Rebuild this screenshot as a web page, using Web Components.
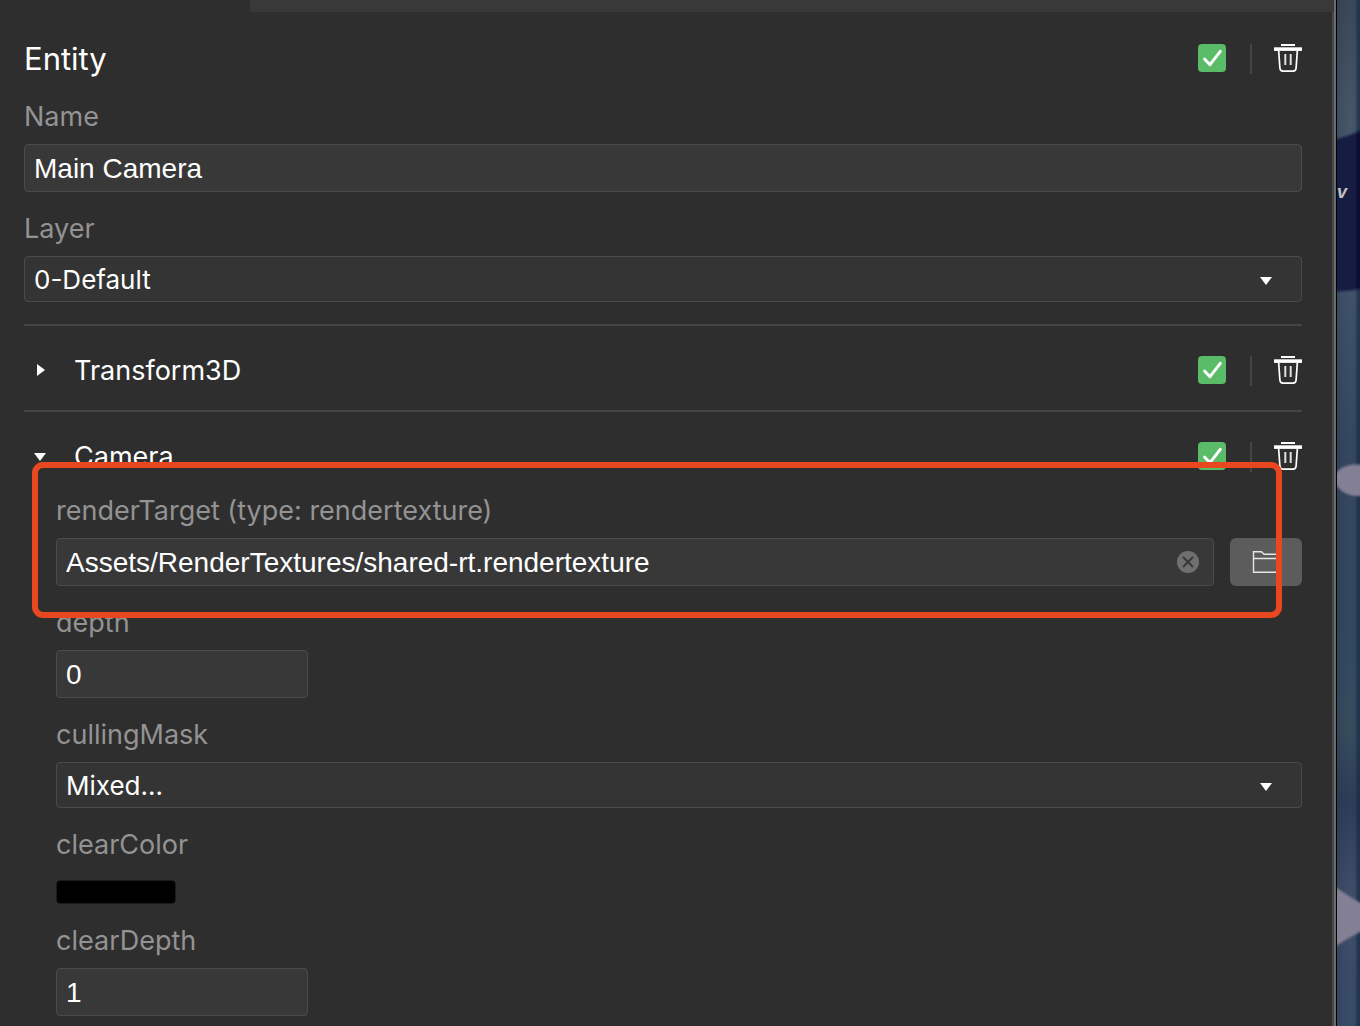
<!DOCTYPE html>
<html lang="en">
<head>
<meta charset="utf-8">
<title>Inspector</title>
<style>
html,body{margin:0;height:100%;overflow:hidden;background:#2e2e2e}
body{font-family:Inter,"Liberation Sans",sans-serif;color:#fff;
--panel:#2e2e2e;--line:#454545;--muted:#939393;--field:#383838;--select:#343434;--border:#4b4b4b}
</style>
</head>
<body>
<editor-shell>
<inspector-panel>
<inspector-section heading="Entity" large>
<property-field label="Name" kind="text" value="Main Camera"></property-field>
<property-field label="Layer" kind="select" value="0-Default"></property-field>
</inspector-section>
<inspector-section heading="Transform3D" collapsible></inspector-section>
<inspector-section heading="Camera" collapsible open>
<highlight-frame slot="overlay"></highlight-frame>
<property-field label="renderTarget (type: rendertexture)" kind="asset" value="Assets/RenderTextures/shared-rt.rendertexture"></property-field>
<property-field label="depth" kind="number" value="0"></property-field>
<property-field label="cullingMask" kind="select" value="Mixed..."></property-field>
<property-field label="clearColor" kind="color" value="#000000"></property-field>
<property-field label="clearDepth" kind="number" value="1"></property-field>
</inspector-section>
</inspector-panel>
<scene-strip slot="scene"></scene-strip>
</editor-shell>
<script>
const base = `:host,*{box-sizing:border-box}button{appearance:none;border:0;padding:0;margin:0;background:none;color:inherit;font:inherit;cursor:pointer;display:block}svg{display:block}`;
function define(name, render){
  customElements.define(name, class extends HTMLElement{
    connectedCallback(){
      if(this.shadowRoot) return;
      const root = this.attachShadow({mode:'open'});
      const t = document.createElement('template');
      t.innerHTML = '<style>' + base + '</style>' + render(this);
      root.append(t.content.cloneNode(true));
    }
  });
}

define('editor-shell', () => `<style>
:host{display:flex;height:100vh;overflow:hidden}
main{flex:1;min-width:0;display:flex;flex-direction:column;border-right:2px solid #6b6b6b}
.tabs{display:flex;flex:none;height:12px}
.active{width:250px}
.rest{flex:1;background:#393939}
.body{flex:1;min-height:0;overflow:hidden;border-right:2px solid #484848}
</style>
<main><div class="tabs"><div class="active"></div><div class="rest"></div></div><div class="body"><slot></slot></div></main><slot name="scene"></slot>`);

define('inspector-panel', () => `<style>
:host{display:block;padding:2px 30px 0 24px}
</style><slot></slot>`);

define('enable-box', el => `<style>
:host{display:grid;width:28px;height:28px}
input,svg{grid-area:1/1}
input{appearance:none;margin:0;width:28px;height:28px;border-radius:4px;background:#5abb69}
svg{pointer-events:none}
input:not(:checked){background:#484848}
input:not(:checked)+svg{visibility:hidden}
</style><input type="checkbox" checked aria-label="Enable ${el.getAttribute('for-name')}"><svg width="28" height="28" viewBox="0 0 28 28" fill="none" stroke="#fff" stroke-width="3" stroke-linecap="round" stroke-linejoin="round"><path d="M6.7 15.2 12 20.7 22.3 7.4"/></svg>`);

define('trash-button', el => `<style>:host{display:block}</style>
<button type="button" aria-label="Delete ${el.getAttribute('for-name')}"><svg width="28" height="28" viewBox="0 0 28 28" fill="none" stroke="#fff"><path d="M7 1h14" stroke-width="2"/><path d="M0 5.100h28" stroke-width="3.600"/><path d="M4.600 6 5.900 24Q6.200 27.200 9 27.200H19Q21.800 27.200 22.100 24L23.400 6" stroke-width="1.700"/><path d="M11.300 10v11M16.700 10v11" stroke-width="2" stroke-opacity=".85"/></svg></button>`);

define('inspector-section', el => {
  const name = el.getAttribute('heading'), fold = el.hasAttribute('collapsible'), open = el.hasAttribute('open');
  const arrow = open
    ? '<svg width="32" height="28" viewBox="0 0 32 28"><path d="M10 11h12l-6 8z" fill="#fff"/></svg>'
    : '<svg width="32" height="28" viewBox="0 0 32 28"><path d="M13 8v12l8-6z" fill="#fff"/></svg>';
  return `<style>
:host{display:block;position:relative}
:host(:not([large])){border-top:2px solid var(--line)}
header{display:flex;align-items:flex-start;padding-top:30px}
h2{margin:0;flex:1;font-weight:400;font-size:27px;line-height:30px}
:host([large]) h2{font-size:31px}
.fold{width:50px;flex:none}
.actions{display:flex}
.rule{width:2px;height:30px;background:var(--line);margin:0 22px 0 24px}
.body{padding-bottom:24px}
:host([large]) .body{padding:14px 0 22px}
:host([open]) .body{padding:10px 0 0 32px}
.fields{display:flex;flex-direction:column;gap:8px}
</style>
<header>${fold ? `<button class="fold" type="button" aria-label="Toggle ${name}" aria-expanded="${open}">${arrow}</button>` : ''}<h2>${name}</h2>
<div class="actions"><enable-box for-name="${name}"></enable-box><div class="rule"></div><trash-button for-name="${name}"></trash-button></div></header>
<div class="body"><div class="fields"><slot></slot></div></div><slot name="overlay"></slot>`;
});

const controls = {
  text: v => `<input id="c" class="box" type="text" value="${v}">`,
  number: v => `<input id="c" class="box short" type="text" inputmode="decimal" value="${v}">`,
  select: v => `<div class="select"><select id="c"><option>${v}</option></select><svg width="12" height="8" viewBox="0 0 12 8"><path d="M0 0h12L6 8z" fill="#fff"/></svg></div>`,
  color: v => `<input id="c" class="swatch" type="color" value="${v}">`,
  asset: v => `<div class="asset"><div class="entry"><input id="c" class="box" type="text" value="${v}"><button class="clear" type="button" aria-label="Clear"><svg width="22" height="22" viewBox="0 0 22 22"><circle cx="11" cy="11" r="11" fill="#707070"/><path d="m6.500 6.500 9 9M15.500 6.500l-9 9" stroke="#383838" stroke-width="2" stroke-linecap="round"/></svg></button></div><button class="browse" type="button" aria-label="Browse"><svg width="28" height="24" viewBox="0 0 28 24" fill="none" stroke="#e6e6e6" stroke-width="1.400"><path d="M1.500 22.300V1.700H9.500L12 4.200H26.500V22.300ZM1.500 8.500H26.500"/></svg></button></div>`
};
define('property-field', el => `<style>
:host{display:block}
label{display:block;font-size:27px;line-height:54px;padding-top:2px;color:var(--muted)}
input,select{outline:0;color:#fff;margin:0;display:block}
.box{width:100%;height:48px;padding:2px 9px 0;border:1px solid var(--border);border-radius:4px;background:var(--field);font:28px "Liberation Sans",Arial,sans-serif}
.short{width:252px}
.select{display:grid;align-items:center}
.select>*{grid-area:1/1}
.select svg{justify-self:end;margin:4px 30px 0 0;pointer-events:none}
select{appearance:none;width:100%;height:46px;padding:0 9px;border:1px solid var(--border);border-radius:4px;background:var(--select);font:26px Inter,"Liberation Sans",sans-serif}
.swatch{appearance:none;width:120px;height:24px;margin-top:8px;padding:0;border:1px solid #1c1c1c;border-radius:4px;background:#000;overflow:hidden}
.swatch::-webkit-color-swatch-wrapper{padding:0}
.swatch::-webkit-color-swatch{border:0}
.asset{display:flex;gap:16px}
.entry{flex:1;display:grid;align-items:center}
.entry>*{grid-area:1/1}
.entry .box{padding-right:48px}
.clear{justify-self:end;margin-right:15px}
.browse{width:72px;height:48px;border-radius:6px;background:#5c5c5c;display:flex;align-items:center;justify-content:center}
</style><label for="c">${el.getAttribute('label')}</label>${controls[el.getAttribute('kind')](el.getAttribute('value'))}`);

define('highlight-frame', () => `<style>
:host{position:absolute;left:8px;right:20px;top:50px;height:156px;border:6px solid #e9471f;border-radius:11px;pointer-events:none}
</style>`);

define('scene-strip', () => `<style>
:host{display:block;position:relative;flex:none;width:24px;height:100%;border-left:1px solid #000;overflow:hidden;background:#34445a}
svg{width:100%;height:100%}
span{position:absolute;left:0;top:182px;font:italic bold 18px/20px "Liberation Sans",sans-serif;color:#c4c4c4}
</style>
<svg viewBox="0 0 23 1026" preserveAspectRatio="none" aria-hidden="true">
<defs>
<linearGradient id="sky" x1="0" y1="0" x2="0" y2="1"><stop offset="0" stop-color="#3c4859"/><stop offset=".12" stop-color="#485769"/><stop offset=".3" stop-color="#405269"/><stop offset=".45" stop-color="#35475f"/><stop offset=".64" stop-color="#344a60"/><stop offset=".71" stop-color="#394d5d"/><stop offset=".78" stop-color="#2e3d57"/><stop offset=".87" stop-color="#414d69"/><stop offset="1" stop-color="#394c68"/></linearGradient>
<linearGradient id="edge"><stop offset="0" stop-color="#142944" stop-opacity=".2"/><stop offset=".6" stop-color="#142944" stop-opacity="0"/><stop offset=".8" stop-color="#142944" stop-opacity=".1"/><stop offset=".88" stop-color="#142944" stop-opacity=".6"/><stop offset="1" stop-color="#142944" stop-opacity=".7"/></linearGradient>
<linearGradient id="navy"><stop offset="0" stop-color="#191c43"/><stop offset=".7" stop-color="#151a42"/><stop offset=".9" stop-color="#03042b"/><stop offset="1" stop-color="#020227"/></linearGradient>
<filter id="soft" x="-20%" y="-5%" width="140%" height="110%"><feGaussianBlur stdDeviation="1"/></filter>
</defs>
<rect width="23" height="1026" fill="url(#sky)"/><rect width="23" height="1026" fill="url(#edge)"/>
<g filter="url(#soft)"><path d="M-4 140Q10 137 27 129V288Q10 292-4 291Z" fill="url(#navy)"/>
<path d="M-3 480Q-2 467 16 464.500H27V496H18Q2 494-3 480Z" fill="#837f94"/>
<path d="M-3 886 12 896 27 905V930L12 938-3 947Z" fill="#837f94"/></g>
</svg><span>v</span>`);
</script>
</body>
</html>
